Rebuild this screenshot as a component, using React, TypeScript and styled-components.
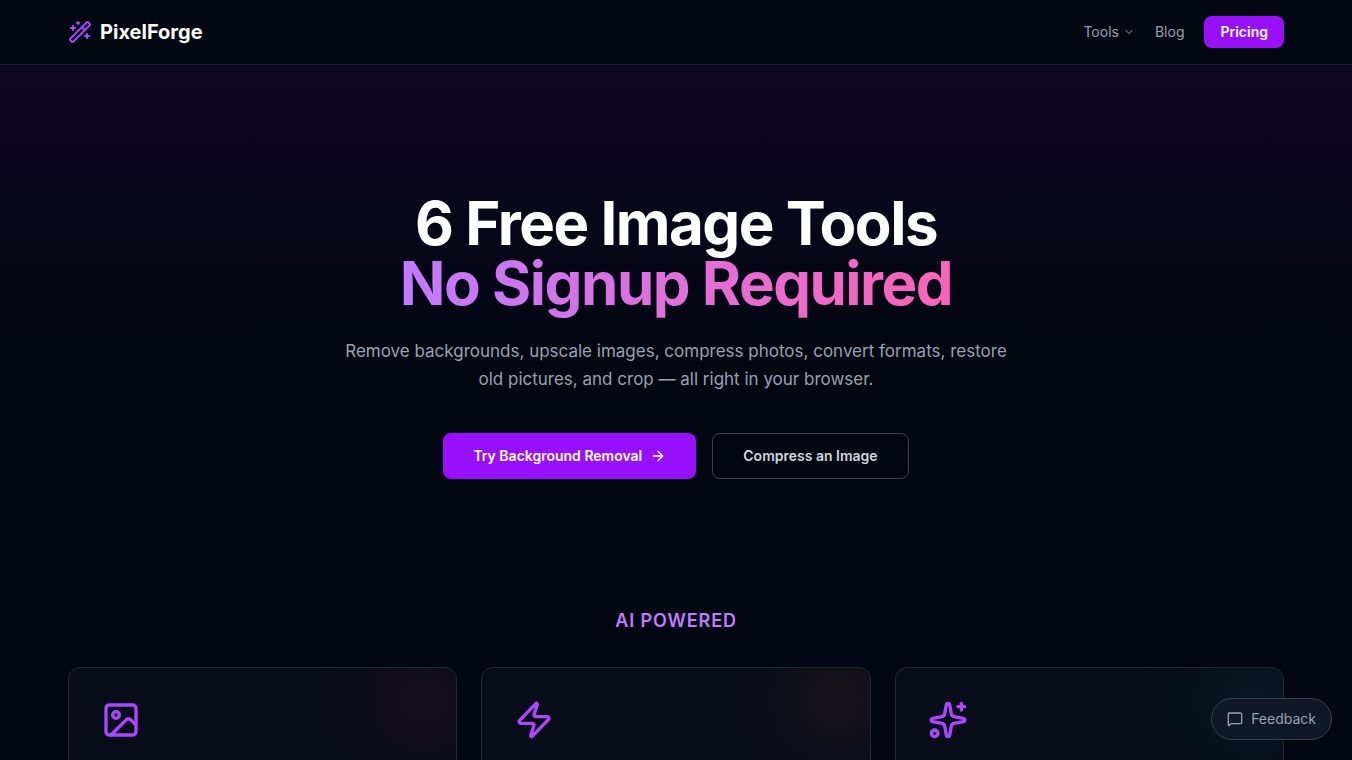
import React from "react";
import styled, { createGlobalStyle } from "styled-components";
import {
  ArrowRight,
  ChevronDown,
  Image as ImageIcon,
  MessageSquare,
  Sparkles,
  WandSparkles,
  Zap,
} from "lucide-react";

const GlobalStyle = createGlobalStyle`
  *, *::before, *::after { box-sizing: border-box; }
  html { scrollbar-width: none; }
  body {
    margin: 0;
    background: #030712;
    color: #ffffff;
    font-family: Inter, "Liberation Sans", sans-serif;
    font-size: 14px;
    line-height: 20px;
    -webkit-font-smoothing: antialiased;
  }
  a { color: inherit; text-decoration: none; }
  button { font: inherit; cursor: pointer; }
  h1, h2, p { margin: 0; }
`;

const Container = styled.div`
  width: 100%;
  max-width: 1280px;
  margin: 0 auto;
  padding: 0 32px;
`;

const Header = styled.header`
  border-bottom: 1px solid #1e2433;
  background: #030712;
`;

const HeaderBar = styled(Container)`
  display: flex;
  align-items: center;
  justify-content: space-between;
  height: 64px;
`;

const Brand = styled.a`
  display: flex;
  align-items: center;
  gap: 8px;
  font-size: 20px;
  line-height: 28px;
  font-weight: 700;

  svg { color: #ad46ff; }
`;

const Nav = styled.nav`
  display: flex;
  align-items: center;
  gap: 20px;
  color: #99a1af;
`;

const MenuButton = styled.button`
  display: flex;
  align-items: center;
  gap: 4px;
  padding: 0;
  border: 0;
  background: none;
  color: inherit;
`;

const NavCta = styled.a`
  padding: 6px 16px;
  border-radius: 8px;
  background: #9810fa;
  color: #ffffff;
  font-weight: 600;
`;

const Hero = styled.section`
  padding: 128px 0;
  background: linear-gradient(to bottom, #0f0623, #030712 50%);
  text-align: center;
`;

const Title = styled.h1`
  font-size: 60px;
  line-height: 60px;
  font-weight: 700;
  letter-spacing: -0.025em;
`;

const TitleAccent = styled.span`
  background: linear-gradient(to right, #c27aff, #fb64b6);
  background-clip: text;
  -webkit-background-clip: text;
  color: transparent;
`;

const Lead = styled.p`
  max-width: 672px;
  margin: 24px auto 0;
  color: #99a1af;
  font-size: 17px;
  line-height: 28px;
`;

const Actions = styled.div`
  display: flex;
  justify-content: center;
  gap: 16px;
  margin-top: 40px;
`;

const Action = styled.a<{ $primary?: boolean }>`
  display: inline-flex;
  align-items: center;
  gap: 8px;
  padding: 12px 30px;
  border: ${(p) => (p.$primary ? "0" : "1px solid #364153")};
  border-radius: 8px;
  background: ${(p) => (p.$primary ? "#9810fa" : "transparent")};
  color: ${(p) => (p.$primary ? "#ffffff" : "#d1d5dc")};
  font-weight: 600;
`;

const SectionTitle = styled.h2`
  color: #c27aff;
  font-size: 18px;
  line-height: 28px;
  font-weight: 600;
  letter-spacing: 0.05em;
  text-align: center;
  text-transform: uppercase;
`;

const CardGrid = styled.div`
  display: grid;
  grid-template-columns: repeat(3, minmax(0, 1fr));
  gap: 24px;
  margin-top: 32px;
`;

const Card = styled.a<{ $glow: string }>`
  position: relative;
  display: block;
  padding: 32px;
  overflow: hidden;
  border: 1px solid #1e2939;
  border-radius: 12px;
  background: #080d1a;
  color: #ad46ff;

  &::before {
    content: "";
    position: absolute;
    top: -32px;
    right: -32px;
    width: 128px;
    height: 128px;
    border-radius: 50%;
    background: ${(p) => p.$glow};
    opacity: 0.06;
    filter: blur(32px);
  }

  svg { display: block; position: relative; }
`;

const Feedback = styled.button`
  position: fixed;
  right: 20px;
  bottom: 20px;
  display: flex;
  align-items: center;
  gap: 8px;
  padding: 10px 15px;
  border: 1px solid #364153;
  border-radius: 999px;
  background: #101828;
  color: #99a1af;
`;

const tools = [
  { name: "Background removal", Icon: ImageIcon, glow: "linear-gradient(to right, #f6339a, #ff2056)" },
  { name: "Image upscaler", Icon: Zap, glow: "linear-gradient(to right, #ff8904, #fb4c36)" },
  { name: "Photo restoration", Icon: Sparkles, glow: "linear-gradient(to right, #00bba7, #00b8db)" },
];

export default function App() {
  return (
    <>
      <GlobalStyle />
      <Header>
        <HeaderBar>
          <Brand href="#">
            <WandSparkles size={24} />
            PixelForge
          </Brand>
          <Nav>
            <MenuButton type="button">
              Tools
              <ChevronDown size={12} />
            </MenuButton>
            <a href="#blog">Blog</a>
            <NavCta href="#pricing">Pricing</NavCta>
          </Nav>
        </HeaderBar>
      </Header>
      <main>
        <Hero>
          <Container>
            <Title>
              6 Free Image Tools
              <br />
              <TitleAccent>No Signup Required</TitleAccent>
            </Title>
            <Lead>
              Remove backgrounds, upscale images, compress photos, convert formats, restore old
              pictures, and crop — all right in your browser.
            </Lead>
            <Actions>
              <Action href="#background" $primary>
                Try Background Removal
                <ArrowRight size={16} />
              </Action>
              <Action href="#compress">Compress an Image</Action>
            </Actions>
          </Container>
        </Hero>
        <Container>
          <SectionTitle>AI Powered</SectionTitle>
          <CardGrid>
            {tools.map(({ name, Icon, glow }) => (
              <Card key={name} href="#tool" aria-label={name} $glow={glow}>
                <Icon size={40} />
              </Card>
            ))}
          </CardGrid>
        </Container>
      </main>
      <Feedback type="button">
        <MessageSquare size={16} />
        Feedback
      </Feedback>
    </>
  );
}
